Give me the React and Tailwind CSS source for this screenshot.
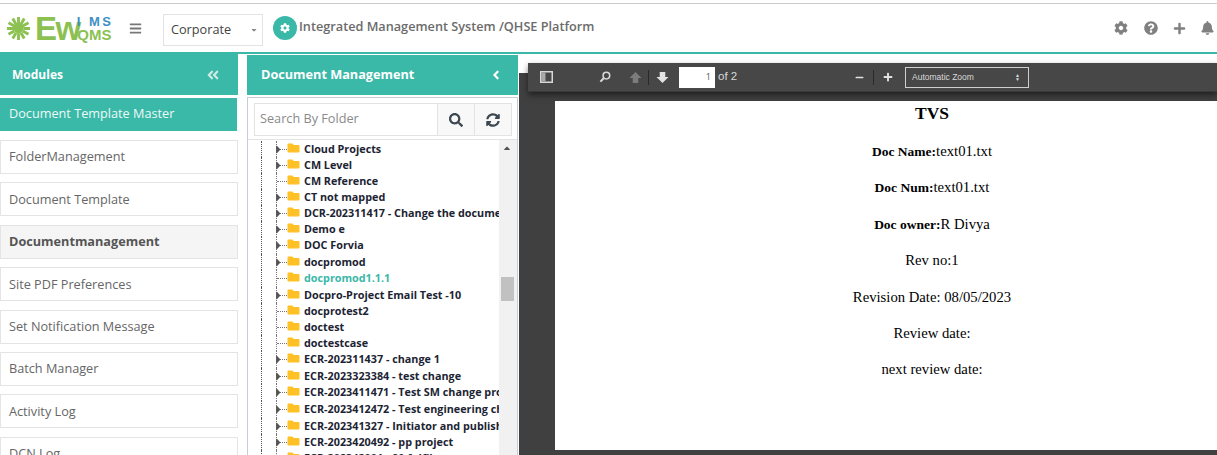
import React from 'react';
import { FaAngleDoubleLeft, FaAngleLeft, FaBars, FaBell, FaCaretDown, FaCaretRight, FaCaretUp, FaCog, FaFolder, FaMinus, FaPlus, FaQuestionCircle, FaSearch, FaSyncAlt } from 'react-icons/fa';

const modules = [
  { label: 'FolderManagement' },
  { label: 'Document Template' },
  { label: 'Documentmanagement', active: true },
  { label: 'Site PDF Preferences' },
  { label: 'Set Notification Message' },
  { label: 'Batch Manager' },
  { label: 'Activity Log' },
  { label: 'DCN Log' },
];

const folders = [
  { name: 'Cloud Projects', arrow: true },
  { name: 'CM Level', arrow: true },
  { name: 'CM Reference' },
  { name: 'CT not mapped', arrow: true },
  { name: 'DCR-202311417 - Change the document', arrow: true },
  { name: 'Demo e', arrow: true },
  { name: 'DOC Forvia', arrow: true, tall: true },
  { name: 'docpromod', arrow: true },
  { name: 'docpromod1.1.1', selected: true, tall: true },
  { name: 'Docpro-Project Email Test -10', arrow: true },
  { name: 'docprotest2' },
  { name: 'doctest' },
  { name: 'doctestcase' },
  { name: 'ECR-202311437 - change 1', arrow: true, tall: true },
  { name: 'ECR-2023323384 - test change', arrow: true },
  { name: 'ECR-2023411471 - Test SM change process', arrow: true, tall: true },
  { name: 'ECR-2023412472 - Test engineering change', arrow: true, tall: true },
  { name: 'ECR-202341327 - Initiator and publisher', arrow: true },
  { name: 'ECR-2023420492 - pp project', arrow: true },
  { name: 'ECR-202342001 - 90 fulfil', arrow: true },
];

const docLines = [
  { label: 'Doc Name:', value: 'text01.txt' },
  { label: 'Doc Num:', value: 'text01.txt' },
  { label: 'Doc owner:', value: 'R Divya' },
  { value: 'Rev no:1' },
  { value: 'Revision Date: 08/05/2023' },
  { value: 'Review date:' },
  { value: 'next review date:' },
];

function Logo() {
  return (
    <div className="flex items-center w-[106px] h-[32px] shrink-0">
      <svg width="25" height="25" viewBox="0 0 26 26" className="shrink-0 text-[#8cc152]">
        {[0, 30, 60, 90, 120, 150].map((a) => (
          <line key={a} x1="1" y1="13" x2="25" y2="13" stroke="currentColor" strokeWidth="3" strokeDasharray="8 1.5 6 1.5 8" transform={`rotate(${a} 13 13)`} />
        ))}
        <circle cx="13" cy="13" r="5" fill="currentColor" />
      </svg>
      <span className="text-[33px] leading-none font-bold text-[#8cc152] tracking-[-1.5px] ml-[4px] font-['Liberation_Sans',sans-serif]">Ew</span>
      <div className="flex flex-col items-end -ml-[3px] mt-[1px] font-['Liberation_Sans',sans-serif] font-bold">
        <span className="text-[13px] leading-[12px] text-[#3d8fc4] tracking-[2.5px] -mr-[2px]">I MS</span>
        <span className="text-[15px] leading-[14px] text-[#8cc152]">QMS</span>
      </div>
    </div>
  );
}

function Header() {
  return (
    <header className="h-[50px] border-b-2 border-[#3ab8a8] bg-white flex items-center pl-[6px] pr-[3px] shrink-0">
      <Logo />
      <FaBars className="text-[#777] ml-[17px] w-[13px] h-[13px] shrink-0" />
      <div className="ml-[21px] mt-[4px] w-[100px] h-[32px] border border-[#e3e3e3] flex items-center justify-between pl-[7px] pr-[4px] text-[12.7px] text-[#444]">
        <span>Corporate</span>
        <FaCaretDown className="text-[#888] w-[8px] h-[8px]" />
      </div>
      <div className="ml-[10px] w-[24px] h-[24px] rounded-full bg-[#3ab8a8] flex items-center justify-center shrink-0">
        <FaCog className="text-white w-[10px] h-[10px]" />
      </div>
      <span className="ml-[2px] text-[12.7px] font-semibold text-[#6b6b6b] whitespace-nowrap -mt-[3px]">Integrated Management System /QHSE Platform</span>
      <div className="ml-auto flex items-center gap-[14px] text-[#808080]">
        <FaCog className="w-[14px] h-[14px]" />
        <FaQuestionCircle className="w-[14px] h-[14px] ml-[2px] mr-[1px]" />
        <FaPlus className="w-[13px] h-[13px]" />
        <FaBell className="w-[13px] h-[14px] ml-[1px]" />
      </div>
    </header>
  );
}

function ModulesPanel() {
  return (
    <aside className="w-[238px] shrink-0 flex flex-col">
      <div className="h-[41px] shrink-0 bg-[#3ab8a8] flex items-center justify-between pl-[12px] pr-[18px] text-white text-[12px] font-bold">
        <span>Modules</span>
        <FaAngleDoubleLeft className="w-[14px] h-[14px] text-[#cfe9e5]" />
      </div>
      <div className="mt-[3px] mr-[1px] h-[33px] shrink-0 bg-[#3ab8a8] flex items-center pl-[9px] text-[12.7px] text-[#eef9f7] pb-[2px]">Document Template Master</div>
      <div className="mt-[9px] flex flex-col gap-[8.4px]">
        {modules.map((m) => (
          <div key={m.label} className={`h-[34px] border border-[#e4e4e4] flex items-center pl-[8px] text-[12.7px] shrink-0 ${m.active ? 'bg-[#f5f5f5] font-bold text-[#555]' : 'bg-white text-[#666]'}`}>
            {m.label}
          </div>
        ))}
      </div>
    </aside>
  );
}

function TreeRow({ folder }) {
  return (
    <div className={`flex items-center shrink-0 ${folder.tall ? 'h-[17px]' : 'h-[16px]'}`}>
      <div className="relative w-[26px] h-full shrink-0 border-l border-dotted border-[#555] ml-[13px]">
        <div className="absolute left-[14px] top-0 bottom-0 border-l border-dotted border-[#777]" />
        <div className="absolute left-[15px] right-0 top-[8px] border-t border-dotted border-[#777]" />
        {folder.arrow && <FaCaretRight className="absolute left-[11px] top-[2px] w-[11px] h-[13px] text-[#555]" />}
      </div>
      <FaFolder className="w-[13px] h-[12px] text-[#ffc125] shrink-0 -mt-[3px]" />
      <span className={`ml-[4px] text-[10.8px] font-bold whitespace-nowrap ${folder.selected ? 'text-[#3ab8a8]' : 'text-[#1c2433]'}`}>{folder.name}</span>
    </div>
  );
}

function DocumentPanel() {
  return (
    <section className="w-[271px] ml-[9px] shrink-0 flex flex-col mt-[1px] min-h-0">
      <div className="h-[40px] shrink-0 bg-[#3ab8a8] flex items-center justify-between pl-[14px] pr-[16px] text-white text-[12.7px] font-bold">
        <span>Document Management</span>
        <FaAngleLeft className="w-[12px] h-[14px]" />
      </div>
      <div className="mt-[2px] flex-1 border-t border-x border-[#c5ced6] flex flex-col min-h-0">
        <div className="mt-[5px] ml-[6px] mr-[5px] h-[33px] border border-[#e3e3e3] flex shrink-0">
          <div className="flex-1 flex items-center pl-[5px] pb-[2px] text-[12.7px] text-[#8a8a8a]">Search By Folder</div>
          <div className="w-[37px] border-l border-[#e3e3e3] bg-[#f8f8f8] flex items-center justify-center">
            <FaSearch className="w-[14px] h-[14px] text-[#3c4750]" />
          </div>
          <div className="w-[37px] border-l border-[#e3e3e3] bg-[#f8f8f8] flex items-center justify-center">
            <FaSyncAlt className="w-[14px] h-[14px] text-[#3c4750]" />
          </div>
        </div>
        <div className="mt-[3px] border-t border-[#e3e3e3] flex flex-1 min-h-0 overflow-hidden">
          <div className="w-[251px] pt-[1px] overflow-hidden shrink-0 flex flex-col">
            {folders.map((f) => (
              <TreeRow key={f.name} folder={f} />
            ))}
          </div>
          <div className="flex-1 bg-[#f1f1f1] relative">
            <FaCaretUp className="absolute left-[3px] top-[3px] w-[10px] h-[10px] text-[#505050]" />
            <div className="absolute left-[2px] w-[13px] top-[137px] h-[24px] bg-[#c1c1c1]" />
          </div>
        </div>
      </div>
    </section>
  );
}

function PdfToolbar() {
  return (
    <div className="h-[29px] bg-[#474747] border-b border-[#3a3a3a] shadow-[0_3px_6px_rgba(0,0,0,0.5)] flex items-center text-[#d9d9d9] shrink-0 relative">
      <svg width="13" height="12" viewBox="0 0 13 12" className="ml-[12px] shrink-0">
        <rect x="0.75" y="0.75" width="11.5" height="10.5" fill="none" stroke="#d9d9d9" strokeWidth="1.5" />
        <rect x="1.5" y="1.5" width="4" height="9" fill="#a8a8a8" />
      </svg>
      <svg width="12" height="12" viewBox="0 0 13 13" className="ml-[46px] shrink-0">
        <circle cx="8" cy="5" r="3.6" fill="none" stroke="#d9d9d9" strokeWidth="1.7" />
        <line x1="5.2" y1="7.8" x2="1.5" y2="11.5" stroke="#d9d9d9" strokeWidth="2.2" />
      </svg>
      <svg width="13" height="13" viewBox="0 0 14 13" className="ml-[18px] shrink-0">
        <path d="M7 0.5 L13.5 7 H10 V12.5 H4 V7 H0.5 Z" fill="#7c7c7c" />
      </svg>
      <div className="ml-[6px] w-px h-[15px] bg-[#2a2a2a] shrink-0" />
      <svg width="13" height="13" viewBox="0 0 14 13" className="ml-[7px] shrink-0">
        <path d="M7 12.5 L13.5 6 H10 V0.5 H4 V6 H0.5 Z" fill="#e2e2e2" />
      </svg>
      <div className="ml-[10px] w-[36px] h-[21px] bg-white text-[#555] text-[9px] flex items-center justify-end pr-[4px] shrink-0">1</div>
      <span className="ml-[3px] w-[19px] text-[11.5px] font-['Liberation_Sans',sans-serif] whitespace-nowrap shrink-0">of 2</span>
      <FaMinus className="ml-[118px] w-[9px] h-[9px] text-[#e2e2e2] shrink-0" />
      <div className="ml-[9px] w-px h-[15px] bg-[#2a2a2a] shrink-0" />
      <FaPlus className="ml-[9px] w-[10px] h-[10px] text-[#e2e2e2] shrink-0" />
      <div className="ml-[12px] w-[124px] h-[21px] border border-[#cfcfcf] bg-[#474747] flex items-center justify-between pl-[6px] pr-[8px] text-[8.5px] font-['Liberation_Sans',sans-serif] shrink-0">
        <span>Automatic Zoom</span>
        <span className="flex flex-col leading-[4px] text-[5px]"><span>▲</span><span>▼</span></span>
      </div>
    </div>
  );
}

function PdfViewer() {
  return (
    <section className="flex-1 min-w-0 ml-[1px] flex overflow-hidden min-h-0">
      <div className="w-[9px] mt-[19px] bg-[#404040] shrink-0" />
      <div className="flex-1 min-w-0 mt-[9px] bg-[#404040] flex flex-col">
        <PdfToolbar />
        <div className="flex-1 pl-[27px] pt-[9px] pb-[5px] min-h-0">
          <div className="bg-white h-full font-['Liberation_Serif',serif] text-[#000] text-center pl-[92px]">
            <h1 className="text-[17.5px] font-bold leading-[24px]">TVS</h1>
            <div className="flex flex-col pt-[15px] gap-[14.4px] text-[14.7px] leading-[22px]">
              {docLines.map((l) => (
                <p key={l.value + (l.label || '')}>
                  {l.label && <b className="text-[13.5px] leading-none">{l.label}</b>}
                  {l.value}
                </p>
              ))}
            </div>
          </div>
        </div>
      </div>
    </section>
  );
}

export default function App() {
  return (
    <div className="w-[1217px] h-[455px] overflow-hidden bg-white flex flex-col font-['Open_Sans',sans-serif]">
      <div className="h-[3px] bg-white border-b border-[#cccccc] box-content shrink-0" />
      <Header />
      <main className="flex flex-1 min-h-0">
        <ModulesPanel />
        <DocumentPanel />
        <PdfViewer />
      </main>
    </div>
  );
}
